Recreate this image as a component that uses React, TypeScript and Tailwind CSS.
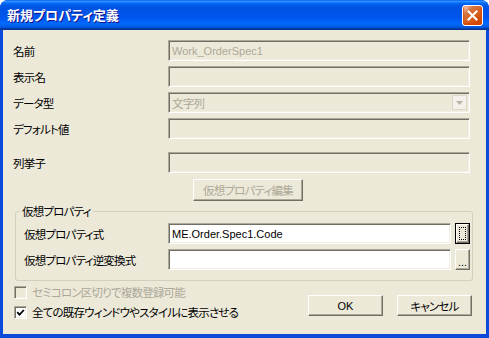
const sunken =
  "border border-t-[#ACA899] border-l-[#ACA899] border-b-white border-r-white shadow-[inset_1px_1px_0_#716F64,inset_-1px_-1px_0_#F1EFE2]"
const raised =
  "border border-t-white border-l-white border-b-[#716F64] border-r-[#716F64] shadow-[inset_-1px_-1px_0_#ACA899] bg-[#ECE9D8]"
const latin = "font-['Liberation_Sans','Noto_Sans_CJK_JP',sans-serif] text-[11px] tracking-normal"

// label + control row for the upper part of the dialog
const Row = ({ label, className = "", children }: { label: string; className?: string; children: React.ReactNode }) => (
  <div className={`flex items-center h-[21px] pl-[10px] ${className}`}>
    <span className="w-[155px] shrink-0">{label}</span>
    {children}
  </div>
)

const Field = ({ text = "", disabled = true, w = "w-[302px]" }: { text?: string; disabled?: boolean; w?: string }) => (
  <div
    className={`${w} h-[21px] ${sunken} flex items-center px-[3px] ${latin} ${
      disabled ? "bg-[#ECE9D8] text-[#ACA899]" : "bg-white text-black"
    }`}
  >
    {text}
  </div>
)

const Check = ({ checked, disabled }: { checked?: boolean; disabled?: boolean }) => (
  <div
    className={`w-[13px] h-[13px] shrink-0 ${sunken} flex items-center justify-center ${
      disabled ? "bg-[#ECE9D8]" : "bg-white"
    }`}
  >
    {checked && (
      <svg width="9" height="9" viewBox="0 0 9 9">
        <path d="M1.2 4.2l2.3 2.4 4.4-4.6" fill="none" stroke="#000" strokeWidth="1.8" />
      </svg>
    )}
  </div>
)

const TitleBar = () => (
  <div className="h-[30px] shrink-0 flex items-center pl-[7px] pr-[6px] bg-[linear-gradient(to_bottom,#0058EE_0%,#3593FF_4%,#288EFF_6%,#127DFF_8%,#036FFC_10%,#0262EE_14%,#0057E5_20%,#0054E3_24%,#0055EB_56%,#005BF5_66%,#026AFE_76%,#0062EF_86%,#0052D6_92%,#0040AB_94%,#003092_100%)]">
    <span className="text-white font-bold text-[13px] leading-[16px] tracking-normal [text-shadow:1px_1px_#0F1089]">
      新規プロパティ定義
    </span>
    <div className="ml-auto w-[21px] h-[21px] rounded-[3px] border border-white flex items-center justify-center bg-[radial-gradient(circle_at_90%_90%,#CC4600_0%,#DC6527_55%,#CD7546_70%,#FFCCB2_90%,white_100%)] shadow-[inset_0_-1px_2px_1px_#DA4600]">
      <svg width="11" height="11" viewBox="0 0 11 11">
        <path d="M1.5 1.5l8 8M9.5 1.5l-8 8" stroke="#fff" strokeWidth="2" strokeLinecap="square" />
      </svg>
    </div>
  </div>
)

export default function App() {
  return (
    <div className="w-[489px] h-[338px] flex flex-col bg-[#0A4BDB] rounded-t-[8px] overflow-hidden font-['Noto_Sans_CJK_JP',sans-serif] text-[11.5px] tracking-[-0.8px] leading-[14px] text-black [font-feature-settings:'palt']">
      <TitleBar />
      <div className="mx-[3px] mb-[4px] flex-1 bg-[#ECE9D8] flex flex-col pt-[10px]">
        <Row label="名前">
          <Field text="Work_OrderSpec1" />
        </Row>
        <Row label="表示名" className="mt-[5px]">
          <Field />
        </Row>
        <Row label="データ型" className="mt-[5px]">
          <div className={`w-[302px] h-[21px] ${sunken} bg-[#ECE9D8] flex items-center pl-[3px] pr-[2px]`}>
            <span className="flex-1 text-[#ACA899]">文字列</span>
            <div className="w-[15px] h-[15px] bg-[#F3F1E9] border border-[#DAD7CB] flex items-center justify-center">
              <svg width="7" height="4" viewBox="0 0 7 4">
                <path d="M0 0h7l-3.5 4z" fill="#B8B5A8" />
              </svg>
            </div>
          </div>
        </Row>
        <Row label="デフォルト値" className="mt-[5px]">
          <Field />
        </Row>
        <Row label="列挙子" className="mt-[13px]">
          <Field />
        </Row>
        <div className="mt-[6px] pl-[190px]">
          <button className={`w-[110px] h-[22px] ${raised} text-[#ACA899] flex items-center justify-center`}>
            仮想プロパティ編集
          </button>
        </div>

        <fieldset className="mt-[3px] ml-[12px] w-[458px] border border-[#D0D0BF] rounded-[3px] pl-[8px] pb-[10px]">
          <legend className="-ml-[4px] px-[2px] leading-[14px]">仮想プロパティ</legend>
          <div className="flex items-center h-[21px] mt-[5px]">
            <span className="w-[144px] shrink-0">仮想プロパティ式</span>
            <Field text="ME.Order.Spec1.Code" disabled={false} w="w-[283px]" />
            <button className="ml-[4px] w-[15px] h-[21px] border border-black p-0">
              <div className={`w-full h-full ${raised} p-[2px]`}>
                <div className="w-full h-full border border-dotted border-black" />
              </div>
            </button>
          </div>
          <div className="flex items-center h-[21px] mt-[5px]">
            <span className="w-[144px] shrink-0">仮想プロパティ逆変換式</span>
            <Field disabled={false} w="w-[283px]" />
            <button className={`ml-[4px] w-[15px] h-[21px] ${raised} flex items-end justify-center pb-[3px] ${latin} leading-[8px]`}>
              ...
            </button>
          </div>
        </fieldset>

        <div className="flex mt-[1px]">
          <div className="flex flex-col pl-[11px]">
            <div className="flex items-center h-[20px] gap-[5px] text-[#ACA899]">
              <Check disabled />
              <span>セミコロン区切りで複数登録可能</span>
            </div>
            <div className="flex items-center h-[20px] gap-[5px]">
              <Check checked />
              <span>全ての既存ウィンドウやスタイルに表示させる</span>
            </div>
          </div>
          <div className="ml-auto mr-[14px] mt-[13px] flex gap-[14px]">
            <button className={`w-[75px] h-[21px] ${raised} ${latin} flex items-center justify-center`}>OK</button>
            <button className={`w-[75px] h-[21px] ${raised} flex items-center justify-center`}>キャンセル</button>
          </div>
        </div>
      </div>
    </div>
  )
}
